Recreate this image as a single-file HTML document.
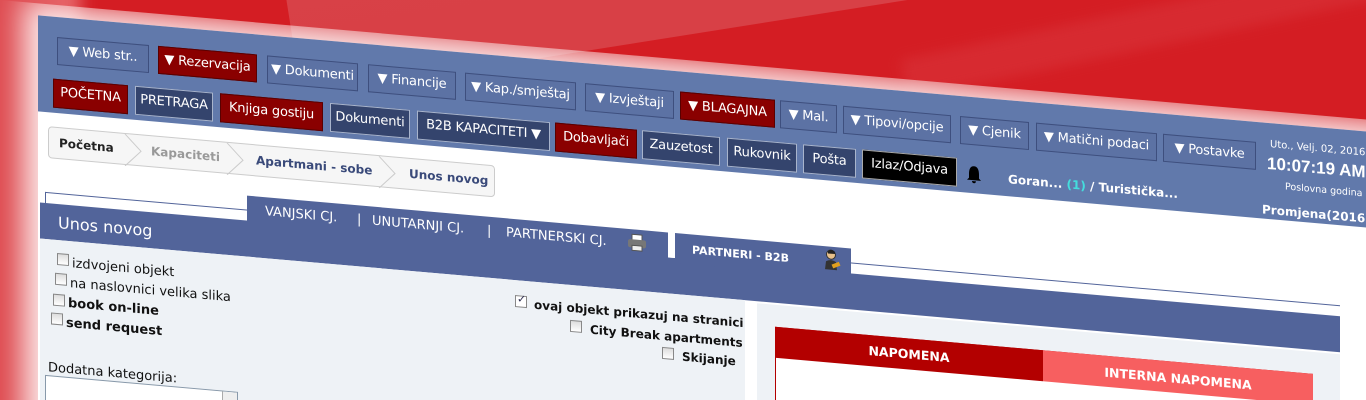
<!DOCTYPE html>
<html><head><meta charset="utf-8"><style>
*{margin:0;padding:0;box-sizing:border-box}
html,body{width:1366px;height:400px;overflow:hidden}
body{background:#d41d23;position:relative;font-family:"DejaVu Sans","Liberation Sans",sans-serif}
.bg1{position:absolute;left:250px;top:-230px;width:1400px;height:330px;background:linear-gradient(180deg,#d84a50,#d9464c);transform:rotate(-9deg);transform-origin:0 0;opacity:.85}
.bg3{position:absolute;left:900px;top:60px;width:600px;height:40px;background:#d72a30;transform:rotate(-12deg);transform-origin:0 0;filter:blur(6px)}
.bg2{position:absolute;left:-60px;top:-40px;width:140px;height:600px;background:linear-gradient(90deg,#d8383e,#e7686c);filter:blur(8px)}
.c{position:absolute;left:0;top:0;width:1500px;height:500px;transform:skewY(5deg);transform-origin:0 0;overflow:hidden}
.frame{position:absolute;left:38px;top:12px;width:1400px;height:600px;background:#fff;box-shadow:0 0 28px 14px rgba(255,255,255,.85)}
.hdr{position:absolute;left:38px;top:12px;width:1400px;height:96px;background:#6179ab}
.b{position:absolute;height:28px;line-height:26px;font-size:13px;color:#fff;border:1px solid #3e4f7e;background:#5c72a4;text-align:center;white-space:nowrap;letter-spacing:-.2px}
.r1{top:32px}.r2{top:74px;height:29px;background:#34446d;border-color:#a8b4cc}
.red{background:#8a0000!important;border-color:#5a0000!important}
.blk{background:#000!important;border-color:#aaa!important}
.t{position:absolute;white-space:nowrap}
.bc{position:absolute;left:48px;top:122px;width:447px;height:32px;border:1px solid #ccc;border-radius:4px;background:#f6f6f6;font-size:12px;font-weight:bold}
.bc span{position:absolute;top:8px}
.band{position:absolute;left:40px;top:199px;width:1300px;height:36px;background:#52649a}
.tab{position:absolute;top:174px;height:30px;background:#52649a}
.lp{position:absolute;left:40px;top:235px;width:705px;height:300px;background:#eef2f6}
.rp{position:absolute;left:757px;top:237px;width:583px;height:300px;background:#eef2f6}
.cb{position:absolute;width:12px;height:12px;border:1px solid #888;background:linear-gradient(#ddd,#fff)}
.f{font-size:13px;color:#111}
.tt{position:absolute;top:181px;font-size:13px;color:#fff;white-space:nowrap}
</style></head><body>
<div class="bg1"></div><div class="bg3"></div><div class="bg2"></div>
<div class="c">
<div class="frame"></div>
<div class="hdr"></div>
<div class="b r1" style="left:57px;width:92px">▼ Web str..</div>
<div class="b r1 red" style="left:158px;width:99px">▼ Rezervacija</div>
<div class="b r1" style="left:267px;width:91px">▼ Dokumenti</div>
<div class="b r1" style="left:368px;width:88px">▼ Financije</div>
<div class="b r1" style="left:465px;width:111px">▼ Kap./smještaj</div>
<div class="b r1" style="left:585px;width:89px">▼ Izvještaji</div>
<div class="b r1 red" style="left:680px;width:95px">▼ BLAGAJNA</div>
<div class="b r1" style="left:780px;width:57px">▼ Mal.</div>
<div class="b r1" style="left:843px;width:108px">▼ Tipovi/opcije</div>
<div class="b r1" style="left:960px;width:69px">▼ Cjenik</div>
<div class="b r1" style="left:1036px;width:121px">▼ Matični podaci</div>
<div class="b r1" style="left:1163px;width:93px">▼ Postavke</div>
<div class="b r2 red" style="left:53px;width:75px">POČETNA</div>
<div class="b r2" style="left:135px;width:78px">PRETRAGA</div>
<div class="b r2 red" style="left:220px;width:103px">Knjiga gostiju</div>
<div class="b r2" style="left:330px;width:80px">Dokumenti</div>
<div class="b r2" style="left:417px;width:133px">B2B KAPACITETI ▼</div>
<div class="b r2 red" style="left:555px;width:82px">Dobavljači</div>
<div class="b r2" style="left:642px;width:78px">Zauzetost</div>
<div class="b r2" style="left:727px;width:70px">Rukovnik</div>
<div class="b r2" style="left:803px;width:53px">Pošta</div>
<div class="b r2 blk" style="left:862px;width:95px">Izlaz/Odjava</div>
<svg class="t" style="left:966px;top:80px" width="16" height="20" viewBox="0 0 16 20"><path d="M8 1 C4 1 3 5 3 9 L3 13 L1 15 L15 15 L13 13 L13 9 C13 5 12 1 8 1Z M6 16 A2 2 0 0 0 10 16Z" fill="#000"/></svg>
<div class="t" style="left:1008px;top:84px;font-size:12px;font-weight:bold;color:#fff">Goran... <span style="color:#4dd">(1)</span> / Turistička...</div>
<div class="t" style="left:1270px;top:28px;font-size:10px;color:#fff">Uto., Velj. 02, 2016</div>
<div class="t" style="left:1267px;top:43px;font-size:17px;font-weight:bold;color:#fff;font-family:'Liberation Sans',sans-serif">10:07:19 AM</div>
<div class="t" style="left:1285px;top:69px;font-size:9.5px;color:#fff">Poslovna godina</div>
<div class="t" style="left:1262px;top:92px;font-size:12px;font-weight:bold;color:#fff">Promjena(2016)</div>
<div class="bc"><span style="left:10px;color:#222">Početna</span><span style="left:102px;color:#999">Kapaciteti</span><span style="left:207px;color:#3a4a7a">Apartmani - sobe</span><span style="left:360px;color:#3a4a7a">Unos novog</span>
<svg style="position:absolute;left:0;top:0" width="447" height="32"><g fill="none" stroke="#ccc"><path d="M76 0 L92 16 L76 32"/><path d="M178 0 L194 16 L178 32"/><path d="M330 0 L346 16 L330 32"/></g></svg></div>
<div style="position:absolute;left:45px;top:188px;width:1295px;height:1px;background:#52649a"></div>
<div style="position:absolute;left:45px;top:188px;width:1px;height:300px;background:#52649a"></div>
<div class="band"></div>
<div class="tab" style="left:247px;width:421px"></div>
<div class="tab" style="left:675px;width:176px;background:#52649a"></div>
<div style="position:absolute;left:668px;top:174px;width:7px;height:25px;background:#fff"></div>
<div class="t" style="left:58px;top:208px;font-size:16px;color:#fff">Unos novog</div>
<div class="tt" style="left:265px">VANJSKI CJ.</div>
<div class="tt" style="left:357px">|</div>
<div class="tt" style="left:372px">UNUTARNJI CJ.</div>
<div class="tt" style="left:487px">|</div>
<div class="tt" style="left:506px">PARTNERSKI CJ.</div>
<svg class="t" style="left:627px;top:178px" width="20" height="18" viewBox="0 0 20 18"><rect x="5" y="1" width="10" height="6" fill="#fff" stroke="#555"/><rect x="1" y="6" width="18" height="8" rx="2" fill="#777"/><rect x="5" y="12" width="10" height="5" fill="#eee" stroke="#555"/></svg>
<div class="t" style="left:692px;top:183px;font-size:11px;font-weight:bold;color:#fff">PARTNERI - B2B</div>
<svg class="t" style="left:823px;top:176px" width="18" height="22" viewBox="0 0 18 22"><circle cx="8" cy="6" r="4.5" fill="#e8c08a" stroke="#333"/><path d="M5 3 Q8 -1 12 3 L12 5 L5 5Z" fill="#222"/><path d="M2 21 L3 13 Q8 10 13 13 L14 21Z" fill="#333"/><rect x="9" y="14" width="8" height="4" fill="#e0a020" transform="rotate(-25 13 16)"/></svg>
<div class="lp"></div>
<div class="rp"></div>
<div class="cb" style="left:57px;top:248px"></div><div class="t f" style="left:72px;top:250px">izdvojeni objekt</div>
<div class="cb" style="left:55px;top:268px"></div><div class="t f" style="left:70px;top:270px">na naslovnici velika slika</div>
<div class="cb" style="left:53px;top:289px"></div><div class="t f" style="left:68px;top:290px;font-weight:bold">book on-line</div>
<div class="cb" style="left:51px;top:308px"></div><div class="t f" style="left:66px;top:310px;font-weight:bold">send request</div>
<div class="cb" style="left:515px;top:250px;background:#fff"><span style="position:absolute;left:1px;top:-4px;font-size:11px;color:#335">✓</span></div>
<div class="t f" style="left:534px;top:251px;font-weight:bold;font-size:12px">ovaj objekt prikazuj na stranici</div>
<div class="cb" style="left:570px;top:270px"></div><div class="t f" style="left:590px;top:271px;font-weight:bold;font-size:12px">City Break apartments</div>
<div class="cb" style="left:662px;top:289px"></div><div class="t f" style="left:682px;top:290px;font-weight:bold;font-size:12px">Skijanje</div>
<div class="t f" style="left:48px;top:356px">Dodatna kategorija:</div>
<div style="position:absolute;left:45px;top:371px;width:193px;height:28px;background:#fff;border:1px solid #8899aa"></div>
<div style="position:absolute;left:222px;top:372px;width:15px;height:26px;background:#eee;border-left:1px solid #aaa"></div>
<div style="position:absolute;left:248px;top:378px;width:18px;height:18px;border-radius:50%;background:#9c3;border:1px solid #570"></div>
<div style="position:absolute;left:775px;top:259px;width:538px;height:200px;border:1px solid #b30000;background:#fff"></div>
<div style="position:absolute;left:775px;top:259px;width:268px;height:31px;background:#b30000;color:#fff;font-size:12.5px;font-weight:bold;text-align:center;line-height:31px">NAPOMENA</div>
<div style="position:absolute;left:1043px;top:259px;width:270px;height:31px;background:#f75f60;color:#fff;font-size:12.5px;font-weight:bold;text-align:center;line-height:33px">INTERNA NAPOMENA</div>
</div>
</body></html>
